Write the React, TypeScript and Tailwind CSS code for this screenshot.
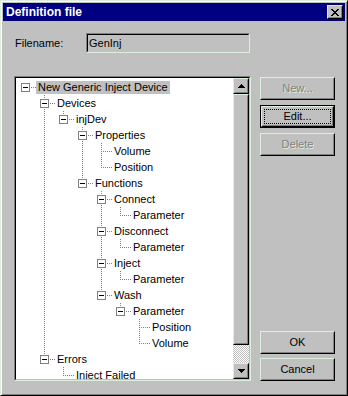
import type { ReactNode } from "react";

// [level, label, hasChildren]
const items: [number, string, boolean][] = [
  [0, "New Generic Inject Device", true],
  [1, "Devices", true],
  [2, "injDev", true],
  [3, "Properties", true],
  [4, "Volume", false],
  [4, "Position", false],
  [3, "Functions", true],
  [4, "Connect", true],
  [5, "Parameter", false],
  [4, "Disconnect", true],
  [5, "Parameter", false],
  [4, "Inject", true],
  [5, "Parameter", false],
  [4, "Wash", true],
  [5, "Parameter", true],
  [6, "Position", false],
  [6, "Volume", false],
  [1, "Errors", true],
  [2, "Iniect Failed", false],
];

const W = 19;

function continues(i: number, j: number) {
  for (let m = i + 1; m < items.length; m++) {
    if (items[m][0] < j) return false;
    if (items[m][0] === j) return true;
  }
  return false;
}

function TreeRow({ i }: { i: number }) {
  const [lvl, label, kids] = items[i];
  const x = lvl * W + 9.5;
  const lines = [];
  for (let j = 0; j < lvl; j++) {
    if (continues(i, j)) lines.push(<line key={j} x1={j * W + 9.5} y1={0} x2={j * W + 9.5} y2={16} />);
  }
  return (
    <div className="flex items-center h-[16px]">
      <svg width={(lvl + 1) * W + 1} height={16} className="shrink-0" shapeRendering="crispEdges">
        <g stroke="#808080" strokeDasharray="1 1">
          {lines}
          {lvl > 0 && <line x1={x} y1={0} x2={x} y2={kids ? 4 : 9} />}
          {continues(i, lvl) && <line x1={x} y1={kids ? 14 : 8} x2={x} y2={16} />}
          <line x1={kids ? lvl * W + 15 : lvl * W + 11} y1={8.5} x2={(lvl + 1) * W + 1} y2={8.5} />
        </g>
        {kids && (
          <>
            <rect x={lvl * W + 5.5} y={4.5} width={8} height={8} fill="#fff" stroke="#808080" />
            <line x1={lvl * W + 7} y1={8.5} x2={lvl * W + 12} y2={8.5} stroke="#000" />
          </>
        )}
      </svg>
      <span className={`px-[2px] h-[13px] leading-[13px] whitespace-nowrap ${i === 0 ? "bg-[#c0c0c0]" : ""}`}>
        {label}
      </span>
    </div>
  );
}

function Raised({ className, children }: { className: string; children?: ReactNode }) {
  return (
    <div className={`bg-[#c0c0c0] border border-t-[#dcefdc] border-l-[#dcefdc] border-b-black border-r-black ${className}`}>
      <div className="h-full w-full border border-t-[#c0c0c0] border-l-[#c0c0c0] border-b-[#808080] border-r-[#808080] flex items-center justify-center">
        {children}
      </div>
    </div>
  );
}

function Arrow({ down }: { down?: boolean }) {
  const rows = [3, 2, 1, 0];
  return (
    <svg width="7" height="4" shapeRendering="crispEdges" className={down ? "rotate-180" : ""}>
      {rows.map((pad, r) => (
        <rect key={r} x={pad} y={r} width={7 - pad * 2} height={1} fill="#000" />
      ))}
    </svg>
  );
}

function CloseGlyph() {
  const px = ["XX....XX", ".XX..XX.", "..XXXX..", "...XX...", "..XXXX..", ".XX..XX.", "XX....XX"];
  return (
    <svg width="8" height="7" shapeRendering="crispEdges">
      {px.flatMap((row, y) =>
        row.split("").map((c, x) => (c === "X" ? <rect key={`${x}-${y}`} x={x} y={y} width={1} height={1} fill="#000" /> : null))
      )}
    </svg>
  );
}

function Button({ label, disabled, isDefault, className = "" }: { label: string; disabled?: boolean; isDefault?: boolean; className?: string }) {
  const text = disabled ? (
    <span className="text-[#808080] [text-shadow:1px_1px_0_#dcefdc]">{label}</span>
  ) : (
    <span>{label}</span>
  );
  if (isDefault) {
    return (
      <div className={`h-[23px] w-[75px] border border-black ${className}`}>
        <Raised className="h-full w-full">
          <div className="m-[1px] h-[calc(100%-2px)] w-[calc(100%-2px)] border border-dotted border-black flex items-center justify-center">
            {text}
          </div>
        </Raised>
      </div>
    );
  }
  return <Raised className={`h-[23px] w-[75px] ${className}`}>{text}</Raised>;
}

export default function App() {
  return (
    <div className="w-[348px] h-[396px] bg-[#c0c0c0] border border-t-[#dcefdc] border-l-[#dcefdc] border-b-black border-r-black shadow-[inset_1px_1px_0_#fff,inset_-1px_-1px_0_#808080] p-[2px] flex flex-col font-['Liberation_Sans',Arial,sans-serif] text-[11px] text-black">
      {/* Title bar */}
      <div className="h-[18px] shrink-0 bg-[#000080] flex items-center justify-between pl-[3px] pr-[2px]">
        <span className="text-white font-bold text-[12px]">Definition file</span>
        <Raised className="w-[16px] h-[14px]">
          <CloseGlyph />
        </Raised>
      </div>

      {/* Filename */}
      <div className="flex items-center mt-[12px] pl-[12px]">
        <span className="w-[71px]">Filename:</span>
        <div className="w-[164px] h-[20px] border border-t-[#808080] border-l-[#808080] border-b-[#dcefdc] border-r-[#dcefdc]">
          <div className="h-full border border-t-black border-l-black border-b-[#c0c0c0] border-r-[#c0c0c0] pl-[1px] flex items-center">
            GenInj
          </div>
        </div>
      </div>

      {/* Tree + buttons */}
      <div className="flex mt-[23px] pl-[11px]">
        <div className="w-[237px] h-[305px] border border-t-[#808080] border-l-[#808080] border-b-[#dcefdc] border-r-[#dcefdc]">
          <div className="h-full flex border border-t-black border-l-black border-b-[#c0c0c0] border-r-[#c0c0c0]">
            <div className="flex-1 bg-white overflow-hidden pt-[1px]">
              {items.map((_, i) => (
                <TreeRow key={i} i={i} />
              ))}
            </div>
            <div className="w-[16px] flex flex-col">
              <Raised className="h-[16px] w-[16px]">
                <Arrow />
              </Raised>
              <Raised className="h-[251px] w-[16px]" />
              <div className="h-[18px] [background:repeating-conic-gradient(#fff_0_25%,#c0c0c0_0_50%)_0_0/2px_2px]" />
              <Raised className="h-[16px] w-[16px]">
                <Arrow down />
              </Raised>
            </div>
          </div>
        </div>

        <div className="ml-[9px] w-[75px] flex flex-col">
          <Button label="New..." disabled className="mt-[1px]" />
          <Button label="Edit..." isDefault className="mt-[5px]" />
          <Button label="Delete" disabled className="mt-[5px]" />
          <Button label="OK" className="mt-auto" />
          <Button label="Cancel" className="mt-[4px]" />
        </div>
      </div>
    </div>
  );
}
